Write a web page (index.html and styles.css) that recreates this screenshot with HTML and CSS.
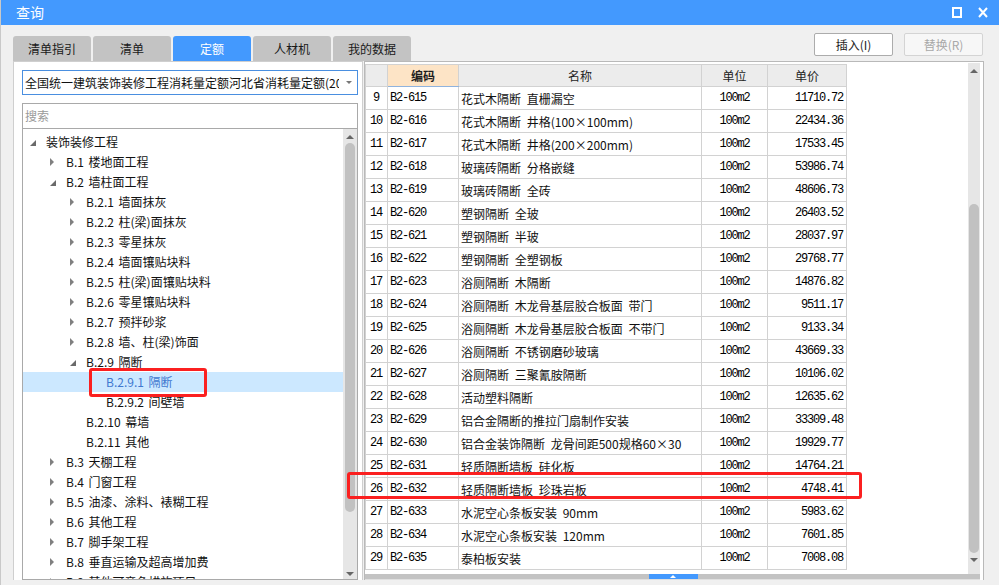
FILE: index.html
```html
<!DOCTYPE html>
<html lang="zh-CN">
<head>
<meta charset="utf-8">
<title>查询</title>
<link rel="stylesheet" href="styles.css">
</head>
<body>
<div class="win">
  <div class="titlebar">
    <span class="title">查询</span>
    <span class="ctrls">
      <svg class="ic-max" width="10" height="11" viewBox="0 0 10 11"><rect x="1" y="1" width="8" height="9" fill="none" stroke="#fff" stroke-width="2"/></svg>
      <svg class="ic-close" width="10" height="11" viewBox="0 0 10 11"><path d="M1 1 L9 10 M9 1 L1 10" stroke="#fff" stroke-width="2" fill="none"/></svg>
    </span>
  </div>

  <div class="toolbar">
    <div class="tabs">
      <div class="tab">清单指引</div>
      <div class="tab">清单</div>
      <div class="tab active">定额</div>
      <div class="tab">人材机</div>
      <div class="tab">我的数据</div>
    </div>
    <div class="btns">
      <button class="btn">插入(I)</button>
      <button class="btn disabled">替换(R)</button>
    </div>
  </div>

  <div class="content">
    <div class="left">
      <div class="select">
        <span class="select-text">全国统一建筑装饰装修工程消耗量定额河北省消耗量定额(2012)</span>
        <span class="caret"></span>
      </div>
      <div class="search">搜索</div>
      <div class="tree">
        <div class="tree-rows">
          <div class="node l0"><span class="arrow exp"></span>装饰装修工程</div>
          <div class="node l1"><span class="arrow col"></span>B.1 楼地面工程</div>
          <div class="node l1"><span class="arrow exp"></span>B.2 墙柱面工程</div>
          <div class="node l2"><span class="arrow col"></span>B.2.1 墙面抹灰</div>
          <div class="node l2"><span class="arrow col"></span>B.2.2 柱(梁)面抹灰</div>
          <div class="node l2"><span class="arrow col"></span>B.2.3 零星抹灰</div>
          <div class="node l2"><span class="arrow col"></span>B.2.4 墙面镶贴块料</div>
          <div class="node l2"><span class="arrow col"></span>B.2.5 柱(梁)面镶贴块料</div>
          <div class="node l2"><span class="arrow col"></span>B.2.6 零星镶贴块料</div>
          <div class="node l2"><span class="arrow col"></span>B.2.7 预拌砂浆</div>
          <div class="node l2"><span class="arrow col"></span>B.2.8 墙、柱(梁)饰面</div>
          <div class="node l2"><span class="arrow exp"></span>B.2.9 隔断</div>
          <div class="node l3 selected"><span class="arrow"></span>B.2.9.1 隔断</div>
          <div class="node l3"><span class="arrow"></span>B.2.9.2 间壁墙</div>
          <div class="node l2"><span class="arrow"></span>B.2.10 幕墙</div>
          <div class="node l2"><span class="arrow"></span>B.2.11 其他</div>
          <div class="node l1"><span class="arrow col"></span>B.3 天棚工程</div>
          <div class="node l1"><span class="arrow col"></span>B.4 门窗工程</div>
          <div class="node l1"><span class="arrow col"></span>B.5 油漆、涂料、裱糊工程</div>
          <div class="node l1"><span class="arrow col"></span>B.6 其他工程</div>
          <div class="node l1"><span class="arrow col"></span>B.7 脚手架工程</div>
          <div class="node l1"><span class="arrow col"></span>B.8 垂直运输及超高增加费</div>
          <div class="node l1"><span class="arrow col"></span>B.9 其他可竞争措施项目</div>
        </div>
        <div class="vscroll tree-scroll">
          <span class="up"></span>
          <span class="thumb"></span>
          <span class="down"></span>
        </div>
      </div>
    </div>

    <div class="right">
      <div class="rbody">
        <div class="grid-area">
          <table class="grid">
            <colgroup>
              <col class="c-no"><col class="c-code"><col class="c-name"><col class="c-unit"><col class="c-price">
            </colgroup>
            <thead>
              <tr><th></th><th class="sorted">编码</th><th>名称</th><th>单位</th><th>单价</th></tr>
            </thead>
            <tbody>
              <tr><td class="no">9</td><td class="code">B2-615</td><td class="name">花式木隔断 直栅漏空</td><td class="unit">100m2</td><td class="price">11710.72</td></tr>
              <tr><td class="no">10</td><td class="code">B2-616</td><td class="name">花式木隔断 井格(100×100mm)</td><td class="unit">100m2</td><td class="price">22434.36</td></tr>
              <tr><td class="no">11</td><td class="code">B2-617</td><td class="name">花式木隔断 井格(200×200mm)</td><td class="unit">100m2</td><td class="price">17533.45</td></tr>
              <tr><td class="no">12</td><td class="code">B2-618</td><td class="name">玻璃砖隔断 分格嵌缝</td><td class="unit">100m2</td><td class="price">53986.74</td></tr>
              <tr><td class="no">13</td><td class="code">B2-619</td><td class="name">玻璃砖隔断 全砖</td><td class="unit">100m2</td><td class="price">48606.73</td></tr>
              <tr><td class="no">14</td><td class="code">B2-620</td><td class="name">塑钢隔断 全玻</td><td class="unit">100m2</td><td class="price">26403.52</td></tr>
              <tr><td class="no">15</td><td class="code">B2-621</td><td class="name">塑钢隔断 半玻</td><td class="unit">100m2</td><td class="price">28037.97</td></tr>
              <tr><td class="no">16</td><td class="code">B2-622</td><td class="name">塑钢隔断 全塑钢板</td><td class="unit">100m2</td><td class="price">29768.77</td></tr>
              <tr><td class="no">17</td><td class="code">B2-623</td><td class="name">浴厕隔断 木隔断</td><td class="unit">100m2</td><td class="price">14876.82</td></tr>
              <tr><td class="no">18</td><td class="code">B2-624</td><td class="name">浴厕隔断 木龙骨基层胶合板面 带门</td><td class="unit">100m2</td><td class="price">9511.17</td></tr>
              <tr><td class="no">19</td><td class="code">B2-625</td><td class="name">浴厕隔断 木龙骨基层胶合板面 不带门</td><td class="unit">100m2</td><td class="price">9133.34</td></tr>
              <tr><td class="no">20</td><td class="code">B2-626</td><td class="name">浴厕隔断 不锈钢磨砂玻璃</td><td class="unit">100m2</td><td class="price">43669.33</td></tr>
              <tr><td class="no">21</td><td class="code">B2-627</td><td class="name">浴厕隔断 三聚氰胺隔断</td><td class="unit">100m2</td><td class="price">10106.02</td></tr>
              <tr><td class="no">22</td><td class="code">B2-628</td><td class="name">活动塑料隔断</td><td class="unit">100m2</td><td class="price">12635.62</td></tr>
              <tr><td class="no">23</td><td class="code">B2-629</td><td class="name">铝合金隔断的推拉门扇制作安装</td><td class="unit">100m2</td><td class="price">33309.48</td></tr>
              <tr><td class="no">24</td><td class="code">B2-630</td><td class="name">铝合金装饰隔断 龙骨间距500规格60×30</td><td class="unit">100m2</td><td class="price">19929.77</td></tr>
              <tr><td class="no">25</td><td class="code">B2-631</td><td class="name">轻质隔断墙板 硅化板</td><td class="unit">100m2</td><td class="price">14764.21</td></tr>
              <tr><td class="no">26</td><td class="code">B2-632</td><td class="name">轻质隔断墙板 珍珠岩板</td><td class="unit">100m2</td><td class="price">4748.41</td></tr>
              <tr><td class="no">27</td><td class="code">B2-633</td><td class="name">水泥空心条板安装 90mm</td><td class="unit">100m2</td><td class="price">5983.62</td></tr>
              <tr><td class="no">28</td><td class="code">B2-634</td><td class="name">水泥空心条板安装 120mm</td><td class="unit">100m2</td><td class="price">7601.85</td></tr>
              <tr><td class="no">29</td><td class="code">B2-635</td><td class="name">泰柏板安装</td><td class="unit">100m2</td><td class="price">7008.08</td></tr>
            </tbody>
          </table>
        </div>
        <div class="vscroll grid-scroll">
          <span class="up"></span>
          <span class="thumb"></span>
          <span class="down"></span>
        </div>
      </div>
      <div class="hscroll"><span class="splitter"></span></div>
    </div>

    <div class="mark mark-tree"></div>
    <div class="mark mark-row"></div>
  </div>
</div>
</body>
</html>
```

FILE: styles.css
```css
* { box-sizing: border-box; }

html, body {
  margin: 0;
  padding: 0;
}

body {
  width: 999px;
  height: 585px;
  overflow: hidden;
  background: #f0f0f0;
  font-family: "Noto Sans CJK SC", "Microsoft YaHei", sans-serif;
  font-size: 12px;
  color: #1e1e1e;
}

.win {
  height: 585px;
  display: flex;
  flex-direction: column;
  border-left: 1px solid #c9c9c9;
}

/* title bar */
.titlebar {
  height: 25px;
  flex: none;
  background: #4399fe;
  color: #fff;
  display: flex;
  align-items: center;
  justify-content: space-between;
  padding: 0 11px 0 15px;
}

.title {
  font-size: 14px;
  line-height: 25px;
}

.ctrls {
  display: flex;
  align-items: center;
  gap: 16px;
}

/* toolbar: tabs + buttons */
.toolbar {
  height: 36px;
  flex: none;
  display: flex;
  justify-content: space-between;
  align-items: flex-start;
  padding: 0 16px 0 12px;
}

.tabs {
  display: flex;
  gap: 2px;
  margin-top: 11px;
}

.tab {
  width: 78px;
  height: 25px;
  background: #c3c3c3;
  border-radius: 3px 3px 0 0;
  display: flex;
  align-items: center;
  justify-content: center;
  font-size: 12px;
  color: #1a1a1a;
}

.tab.active {
  background: #4399fe;
  color: #fff;
}

.btns {
  display: flex;
  gap: 11px;
  margin-top: 8px;
}

.btn {
  width: 79px;
  height: 23px;
  border: 1px solid #acacac;
  border-radius: 2px;
  background: #fff;
  font-family: "Noto Sans CJK SC", "Microsoft YaHei", sans-serif;
  font-size: 12px;
  color: #1e1e1e;
  padding: 0;
}

.btn.disabled {
  color: #a8a8a8;
  border-color: #d4d4d4;
  background: #f7f7f7;
}

/* content */
.content {
  position: relative;
  height: 519px;
  flex: none;
  display: flex;
  gap: 1px;
  padding-left: 12px;
}

.left {
  width: 350px;
  background: #fff;
  border: 1px solid #cfcfcf;
  border-bottom: none;
  padding: 8px 0 0 8px;
  display: flex;
  flex-direction: column;
}

.select {
  width: 336px;
  height: 25px;
  border: 1px solid #4a8fe0;
  display: flex;
  align-items: center;
  padding: 0 0 0 2px;
  overflow: hidden;
}

.select-text {
  flex: 1;
  white-space: nowrap;
  overflow: hidden;
  font-size: 12px;
  line-height: 23px;
  color: #111;
}

.caret {
  flex: none;
  width: 0;
  height: 0;
  margin: 0 5px 0 7px;
  border-top: 3px solid #777;
  border-left: 3px solid transparent;
  border-right: 3px solid transparent;
}

.search {
  width: 336px;
  height: 26px;
  margin-top: 8px;
  border: 1px solid #a9a9a9;
  padding-left: 2px;
  line-height: 24px;
  color: #9a9a9a;
  font-size: 12px;
}

.tree {
  width: 336px;
  flex: 1;
  border: 1px solid #a9a9a9;
  border-top: none;
  display: flex;
  overflow: hidden;
}

.tree-rows {
  flex: 1;
  padding-top: 3px;
  overflow: hidden;
}

.node {
  height: 20px;
  line-height: 20px;
  display: flex;
  white-space: pre;
  word-spacing: 2px;
  color: #111;
}

.node.l0 { padding-left: 7px; }
.node.l1 { padding-left: 27px; }
.node.l2 { padding-left: 47px; }
.node.l3 { padding-left: 67px; }

.node.selected {
  background: #cce8ff;
  color: #3f78d0;
}

.arrow {
  position: relative;
  width: 16px;
  height: 20px;
  flex: none;
}

.arrow.col::before {
  content: "";
  position: absolute;
  left: 0;
  top: 6px;
  border-left: 4px solid #808080;
  border-top: 4px solid transparent;
  border-bottom: 4px solid transparent;
}

.arrow.exp::before {
  content: "";
  position: absolute;
  left: 0;
  top: 8px;
  border-bottom: 6px solid #6a6a6a;
  border-left: 6px solid transparent;
}

/* scrollbars */
.vscroll {
  flex: none;
  display: flex;
  flex-direction: column;
  align-items: center;
  background: #e6e6e6;
}

.vscroll .up,
.vscroll .down {
  width: 0;
  height: 0;
  border-left: 4px solid transparent;
  border-right: 4px solid transparent;
}

.vscroll .up { border-bottom: 4px solid #666; }
.vscroll .down { border-top: 4px solid #666; }

.vscroll .thumb {
  width: 10px;
  background: #c1c1c1;
  border-radius: 5px;
}

.tree-scroll {
  width: 14px;
}

.tree-scroll .up { margin-top: 6px; }
.tree-scroll .thumb { margin-top: 4px; height: 369px; }
.tree-scroll .down { margin-top: 60px; }

.right {
  width: 620px;
  border: 1px solid #b9b9b9;
  border-bottom: none;
  background: #fff;
  display: flex;
  flex-direction: column;
  padding-top: 1px;
}

.rbody {
  flex: 1;
  display: flex;
  overflow: hidden;
}

.grid-area {
  flex: 1;
  overflow: hidden;
}

.grid-scroll {
  width: 12px;
  margin-right: 3px;
}

.grid-scroll .up { margin-top: 6px; }
.grid-scroll .thumb { margin-top: 131px; height: 349px; }
.grid-scroll .down { margin-top: 5px; }

.hscroll {
  height: 6px;
  flex: none;
  margin-right: 3px;
  background: #c3c3c3;
  display: flex;
  justify-content: flex-start;
  border-bottom: 1px solid #e0e0e0;
}

.splitter {
  width: 49px;
  height: 5px;
  margin-left: 284px;
  background: #4399fe;
  position: relative;
}

.splitter::after {
  content: "";
  position: absolute;
  left: 21px;
  top: 1px;
  border-bottom: 3px solid #fff;
  border-left: 3px solid transparent;
  border-right: 3px solid transparent;
}

/* data grid */
.grid {
  border-collapse: collapse;
  table-layout: fixed;
  width: 481px;
  margin-top: 1px;
}

.c-no { width: 22px; }
.c-code { width: 71px; }
.c-name { width: 243px; }
.c-unit { width: 66px; }
.c-price { width: 79px; }

.grid th,
.grid td {
  border: 1px solid #d2d2d2;
  padding: 0 2px;
  white-space: nowrap;
  overflow: hidden;
}

.grid th {
  height: 22px;
  background: #ececec;
  font-weight: normal;
  font-size: 12px;
  color: #1e1e1e;
  text-align: center;
}

.grid th.sorted {
  background: #fde4c6;
  font-weight: bold;
  border-bottom: 1px solid #8fb3de;
}

.grid td {
  height: 23px;
  font-size: 12px;
  color: #111;
}

.grid td.no,
.grid td.code,
.grid td.unit,
.grid td.price {
  font-family: "Liberation Mono", "Noto Sans CJK SC", monospace;
  font-size: 12px;
  letter-spacing: -1.2px;
  color: #000;
}

.grid td.no {
  text-align: center;
  padding: 0 1px 0 0;
}

.grid td.unit { text-align: center; }
.grid td.price { text-align: right; padding-right: 3px; }

.grid td.name {
  word-spacing: 3px;
}

/* red annotation boxes */
.mark {
  position: absolute;
  border: 3px solid #fb2020;
  border-radius: 3px;
}

.mark-tree {
  left: 88px;
  top: 307px;
  width: 118px;
  height: 29px;
}

.mark-row {
  left: 346px;
  top: 411px;
  width: 515px;
  height: 27px;
}
```
